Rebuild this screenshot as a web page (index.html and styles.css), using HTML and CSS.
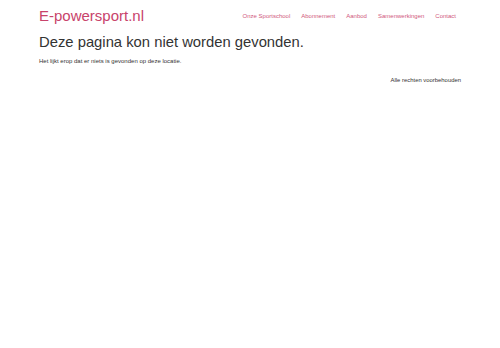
FILE: index.html
```html
<!DOCTYPE html>
<html lang="nl">
<head>
    <meta charset="UTF-8">
    <title>Pagina niet gevonden | E-powersport.nl</title>
    <link rel="stylesheet" href="styles.css">
</head>
<body>
    <div class="wrap">
        <header class="site-header">
            <a class="logo" href="#">E-powersport.nl</a>
            <nav class="main-nav">
                <a href="#">Onze Sportschool</a>
                <a href="#">Abonnement</a>
                <a href="#">Aanbod</a>
                <a href="#">Samenwerkingen</a>
                <a href="#">Contact</a>
            </nav>
        </header>

        <main>
            <h1>Deze pagina kon niet worden gevonden.</h1>
            <p>Het lijkt erop dat er niets is gevonden op deze locatie.</p>
        </main>

        <footer>Alle rechten voorbehouden</footer>
    </div>
</body>
</html>
```

FILE: styles.css
```css
body {
    margin: 0;
    font-family: 'Liberation Sans', Arial, sans-serif;
    color: #333;
    background: #fff;
}

a {
    text-decoration: none;
}

.wrap {
    width: 422px;
    margin: 0 auto;
}

.site-header {
    display: flex;
    justify-content: space-between;
    align-items: center;
    height: 31px;
}

.logo {
    font-size: 15px;
    color: #c8436b;
}

.main-nav {
    display: flex;
    gap: 11px;
    padding-right: 5px;
}

.main-nav a {
    font-size: 6px;
    color: #d0577d;
}

h1 {
    margin: 0;
    font-size: 14.8px;
    font-weight: normal;
    line-height: 22px;
}

main p {
    margin: 5px 0 0;
    font-size: 6px;
}

footer {
    margin-top: 13px;
    text-align: right;
    font-size: 5.9px;
}
```
